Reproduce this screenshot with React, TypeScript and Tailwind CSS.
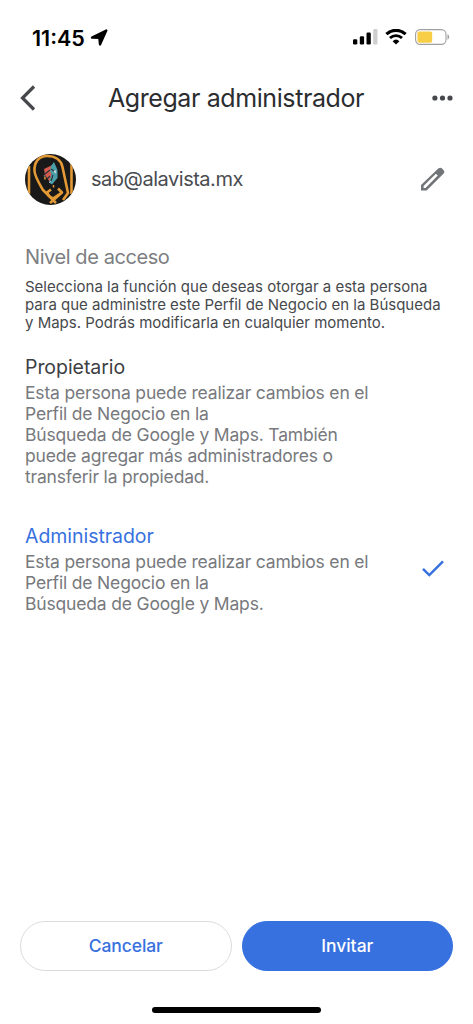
import { clsx } from "clsx";

type AccessLevel = {
  id: string;
  title: string;
  lines: string[];
};

const accessLevels: AccessLevel[] = [
  {
    id: "owner",
    title: "Propietario",
    lines: [
      "Esta persona puede realizar cambios en el",
      "Perfil de Negocio en la",
      "Búsqueda de Google y Maps. También",
      "puede agregar más administradores o",
      "transferir la propiedad.",
    ],
  },
  {
    id: "manager",
    title: "Administrador",
    lines: [
      "Esta persona puede realizar cambios en el",
      "Perfil de Negocio en la",
      "Búsqueda de Google y Maps.",
    ],
  },
];

function StatusBar() {
  return (
    <div className="flex h-[74px] items-center justify-between pr-[23px] pl-8">
      <div className="flex items-center gap-[5px] pt-0.5">
        <span className="text-[21.500px] leading-6 font-semibold text-black">11:45</span>
        <svg width="18" height="18" viewBox="0 0 18 18">
          <path
            d="M16.300 1.500 10 15.500 9.300 8.900 2 8.600Z"
            fill="#000"
            stroke="#000"
            strokeWidth="2.300"
            strokeLinejoin="round"
          />
        </svg>
      </div>
      <div className="flex items-center">
        <svg width="25" height="16" viewBox="0 0 25 16">
          <rect x="0" y="10.300" width="4.300" height="5.200" rx="1.200" />
          <rect x="6.800" y="7.300" width="4.300" height="8.200" rx="1.200" />
          <rect x="13.500" y="3.500" width="4.300" height="12" rx="1.200" />
          <rect x="20.200" y="0" width="4.300" height="15.500" rx="1.200" fill="#cfcfcf" />
        </svg>
        <svg className="ml-[7px]" width="22" height="16" viewBox="0 0 22 16">
          <path d="M1.400 5.200a13.900 13.900 0 0 1 19.200 0" fill="none" stroke="#000" strokeWidth="3.200" />
          <path d="M5 9a8.800 8.800 0 0 1 12 0" fill="none" stroke="#000" strokeWidth="2.900" />
          <path d="M7.600 12.200a5 5 0 0 1 6.800 0L11 15.600Z" />
        </svg>
        <svg className="ml-2" width="35" height="16" viewBox="0 0 35 16">
          <rect x="0.600" y="0.600" width="30.400" height="14.800" rx="4.600" fill="none" stroke="#a0a0a0" strokeWidth="1.100" />
          <rect x="2.400" y="2.400" width="14.800" height="11.300" rx="2" fill="#f8ce46" />
          <path d="M32.500 5.300c2.200.8 2.200 4.600 0 5.400Z" fill="#a0a0a0" />
        </svg>
      </div>
    </div>
  );
}

function Avatar() {
  return (
    <svg className="size-[51px] shrink-0 rounded-full" viewBox="0 0 51 51">
      <rect width="51" height="51" fill="#191919" />
      <g fill="none" stroke="#e39a35" strokeWidth="2.600" strokeLinejoin="round">
        <path d="M4 12v28M46.500 10v30" />
        <path d="M31 49 18 36C14 29 10 23 9.500 17C9 8 14 2 22 2C30 2 36 6 37.500 13L43 39L38 46" />
        <path d="m26 35.500-4 3 2 3.500 4 2.500 9-6-4-4M37 38.500 25 49" />
      </g>
      <path d="m19 15 8.500-4-2 18-5.500-8Z" fill="#d75b4c" />
      <path d="m26 12 3-4 3.500 8v8l-5.500 6.500-3-2 2.500-8-1.500-4Z" fill="#4a9fa9" />
      <path d="m20 20 5-4M22 25l3-3M26 15l3 2M26 27l2-6" stroke="#26343a" strokeWidth="1.200" />
      <path d="m30 16 1 3-2-1M19 21l1 2M24 29l2-2" fill="#eee" stroke="#d9d9d9" strokeWidth=".6" />
      <path d="M20 23v2.500M28.500 31v2.500" stroke="#e39a35" strokeWidth="1.500" />
    </svg>
  );
}

function AccessOption({ level, selected }: { level: AccessLevel; selected: boolean }) {
  return (
    <button type="button" className="flex w-full items-center justify-between text-left">
      <span className="block">
        <span
          className={clsx(
            "block text-[19.500px] leading-[26px] tracking-[-0.05px]",
            selected ? "text-[#3771e0]" : "text-[#3c4043]",
          )}
        >
          {level.title}
        </span>
        <span className="mt-0.5 block text-[17.500px] leading-[21px] tracking-[-0.175px] text-[#77797d]">
          {level.lines.map((line) => (
            <span key={line} className="block whitespace-nowrap">
              {line}
            </span>
          ))}
        </span>
      </span>
      {selected ? (
        <svg className="mr-[9px]" width="22" height="17" viewBox="0 0 22 17">
          <path d="m1 8.800 6.300 6.300L21 1.400" fill="none" stroke="#3771e0" strokeWidth="2.500" />
        </svg>
      ) : null}
    </button>
  );
}

export default function App() {
  return (
    <div className="flex h-screen flex-col bg-white font-[Inter,sans-serif]">
      <StatusBar />
      <header className="flex h-12 items-center justify-between pr-5 pl-5">
        <button type="button" aria-label="Atrás" className="w-5">
          <svg width="16" height="26" viewBox="0 0 16 26">
            <path d="M14 1.500 2.500 13 14 24.500" fill="none" stroke="#46484b" strokeWidth="3.200" />
          </svg>
        </button>
        <h1 className="text-[25px] leading-8 tracking-[-0.4px] whitespace-nowrap text-[#2b2d30]">
          Agregar administrador
        </h1>
        <button type="button" aria-label="Más opciones">
          <svg width="21" height="6" viewBox="0 0 21 6" fill="#46484b">
            <circle cx="2.900" cy="3" r="2.600" />
            <circle cx="10.500" cy="3" r="2.600" />
            <circle cx="18" cy="3" r="2.600" />
          </svg>
        </button>
      </header>

      <main className="flex-1 pr-5 pl-[25px]">
        <div className="mt-8 flex items-center">
          <Avatar />
          <span className="ml-[15px] pb-0.5 text-[20px] leading-6 tracking-[-0.48px] text-[#494c50]">
            sab@alavista.mx
          </span>
          <button type="button" aria-label="Editar" className="mr-2 ml-auto">
            <svg width="25" height="25" viewBox="0 0 25 25" fill="#727578">
              <path
                d="M18.300 1.600a2.700 2.700 0 0 1 3.800 0l1.300 1.300a2.700 2.700 0 0 1 0 3.800L6.600 23.500H1v-5.600ZM3.600 19v1.900h1.900L17.800 8.600l-1.900-1.900Z"
                fillRule="evenodd"
              />
            </svg>
          </button>
        </div>

        <h2 className="mt-[38px] text-[20px] leading-7 tracking-[-0.42px] text-[#7c7e82]">Nivel de acceso</h2>
        <p className="mt-[7px] text-[15px] leading-[18px] whitespace-nowrap text-[#46494c]">
          Selecciona la función que deseas otorgar a esta persona
          <br />
          para que administre este Perfil de Negocio en la Búsqueda
          <br />y Maps. Podrás modificarla en cualquier momento.
        </p>

        <div className="mt-[22px] flex flex-col gap-9">
          {accessLevels.map((level) => (
            <AccessOption key={level.id} level={level} selected={level.id === "manager"} />
          ))}
        </div>
      </main>

      <footer className="flex flex-col items-center">
        <div className="flex w-full gap-2.5 px-5">
          <button
            type="button"
            className="h-[50px] flex-1 rounded-full border border-[#dadce0] text-[17.500px] font-medium tracking-[-0.1px] text-[#3771e0]"
          >
            Cancelar
          </button>
          <button
            type="button"
            className="h-[50px] flex-1 rounded-full border border-[#3771e0] bg-[#3771e0] text-[17.500px] font-medium text-white"
          >
            Invitar
          </button>
        </div>
        <div className="mt-9 mb-[11px] h-1.5 w-[169px] rounded-full bg-black" />
      </footer>
    </div>
  );
}
